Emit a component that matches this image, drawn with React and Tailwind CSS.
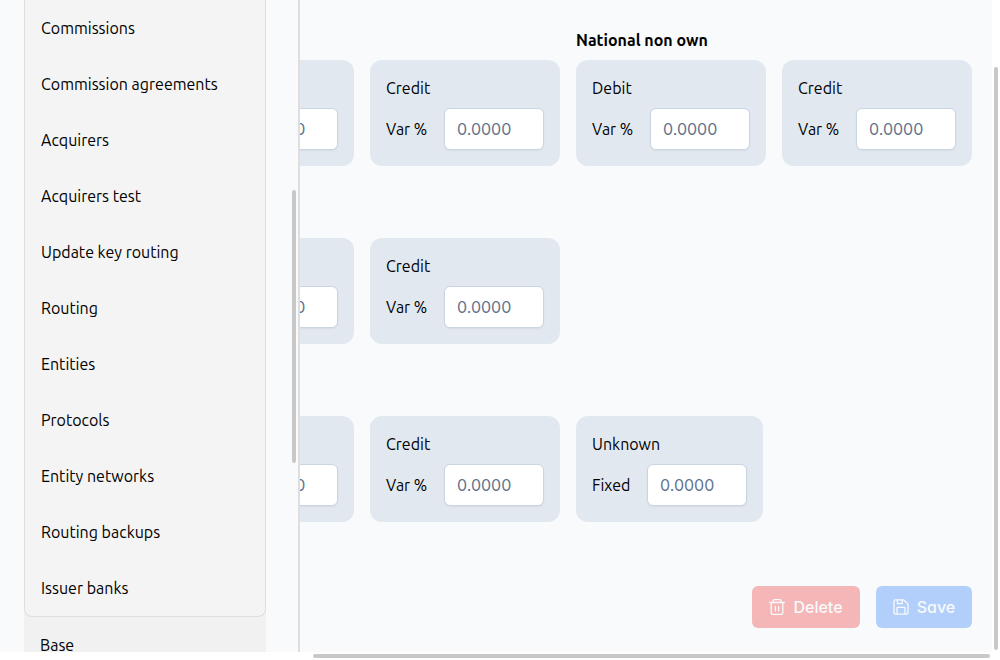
import React from "react";

const items = [
  "Commissions",
  "Commission agreements",
  "Acquirers",
  "Acquirers test",
  "Update key routing",
  "Routing",
  "Entities",
  "Protocols",
  "Entity networks",
  "Routing backups",
  "Issuer banks",
];

function RateCard({ id, title, label = "Var %" }) {
  return (
    <section className="shrink-0 rounded-xl bg-slate-200 p-4">
      <h3>{title}</h3>
      <div className="mt-2 flex items-center gap-4">
        <label htmlFor={id} className={label === "Fixed" ? "w-[39px]" : "w-[42px] whitespace-nowrap"}>
          {label}
        </label>
        <input
          id={id}
          type="text"
          placeholder="0.0000"
          className="h-[42px] w-[100px] rounded-md border border-slate-300 bg-white px-3 font-['Inter',sans-serif] shadow-xs outline-none placeholder:text-slate-500 focus:border-blue-500"
        />
      </div>
    </section>
  );
}

function Group({ title, children }) {
  return (
    <div className="shrink-0">
      <h2 className="mb-2 h-6 font-bold">{title}</h2>
      <div className="flex gap-4">{children}</div>
    </div>
  );
}

function TrashIcon() {
  return (
    <svg className="size-4" viewBox="0 0 16 16" fill="none" stroke="currentColor" strokeWidth="1.3" strokeLinecap="round" strokeLinejoin="round" aria-hidden="true">
      <path d="M.7 3.5h14.6M4 3.4V2C4 1.2 4.6.7 5.4.7h5.2c.8 0 1.4.5 1.4 1.3v1.4M2.2 3.6V14c0 .9.5 1.4 1.4 1.4h8.8c.9 0 1.4-.5 1.4-1.4V3.6M6.4 7.4v4.4M9.6 7.4v4.4" />
    </svg>
  );
}

function SaveIcon() {
  return (
    <svg className="size-4" viewBox="0 0 16 16" fill="none" stroke="currentColor" strokeWidth="1.3" strokeLinecap="round" strokeLinejoin="round" aria-hidden="true">
      <path d="M2.4.8h8.2L15 5.1v8.7c0 .9-.5 1.4-1.4 1.4H2.4c-.9 0-1.4-.5-1.4-1.4V2.2C1 1.300 1.500.8 2.400.8ZM4.400 1v3.600h4.800V1M4 15V9.100c0-.5.2-.7.7-.7h6.600c.5 0 .7.2.7.7V15" />
    </svg>
  );
}

export default function App() {
  return (
    <div className="flex h-screen flex-col bg-white font-['Ubuntu','Noto_Sans',sans-serif] text-base text-black">
      <div className="flex min-h-0 flex-1">
        <aside className="flex w-[300px] shrink-0 overflow-hidden border-r-2 border-[#dedede] bg-slate-50 pl-6">
          <nav className="w-[242px] bg-[#f1f1f1]">
            <ul className="rounded-b-lg border border-t-0 border-[#dedede] bg-[#f4f4f4]">
              {items.map((item) => (
                <li key={item}>
                  <a href="#" className="flex h-14 items-center px-4">{item}</a>
                </li>
              ))}
            </ul>
            <a href="#" className="flex h-14 items-center px-4">Base</a>
          </nav>
          <div className="ml-auto flex w-2 flex-col px-[2px] pt-[190px]">
            <div className="h-[273px] rounded-sm bg-[#c8c8c8]" />
          </div>
        </aside>

        <main className="min-w-0 flex-1 overflow-hidden bg-slate-50 pt-7 pr-5">
          <div className="-ml-[136px] flex flex-col gap-10">
            <div className="flex gap-4">
              <Group>
                <RateCard id="own-debit" title="Debit" />
                <RateCard id="own-credit" title="Credit" />
              </Group>
              <Group title="National non own">
                <RateCard id="non-own-debit" title="Debit" />
                <RateCard id="non-own-credit" title="Credit" />
              </Group>
            </div>
            <Group>
              <RateCard id="regional-debit" title="Debit" />
              <RateCard id="regional-credit" title="Credit" />
            </Group>
            <Group>
              <RateCard id="other-debit" title="Debit" />
              <RateCard id="other-credit" title="Credit" />
              <RateCard id="other-unknown" title="Unknown" label="Fixed" />
            </Group>
          </div>
          <div className="mt-16 flex justify-end gap-4 font-['Inter',sans-serif] font-medium text-slate-50 [font-feature-settings:'cv02','cv03','cv04','cv11']">
            <button type="button" disabled className="flex h-[42px] w-[108px] items-center justify-center gap-2 rounded-md bg-[#f4b6b6]">
              <TrashIcon />
              Delete
            </button>
            <button type="button" disabled className="flex h-[42px] w-24 items-center justify-center gap-2 rounded-md bg-[#b2cefa]">
              <SaveIcon />
              Save
            </button>
          </div>
        </main>

        <div className="flex w-2 shrink-0 flex-col px-[2px] pt-[67px] pb-[2px]">
          <div className="flex-1 rounded-sm bg-[#c8c8c8]" />
        </div>
      </div>
      <div className="flex h-2 shrink-0 py-[2px] pr-[10px] pl-[313px]">
        <div className="flex-1 rounded-sm bg-[#c8c8c8]" />
      </div>
    </div>
  );
}
